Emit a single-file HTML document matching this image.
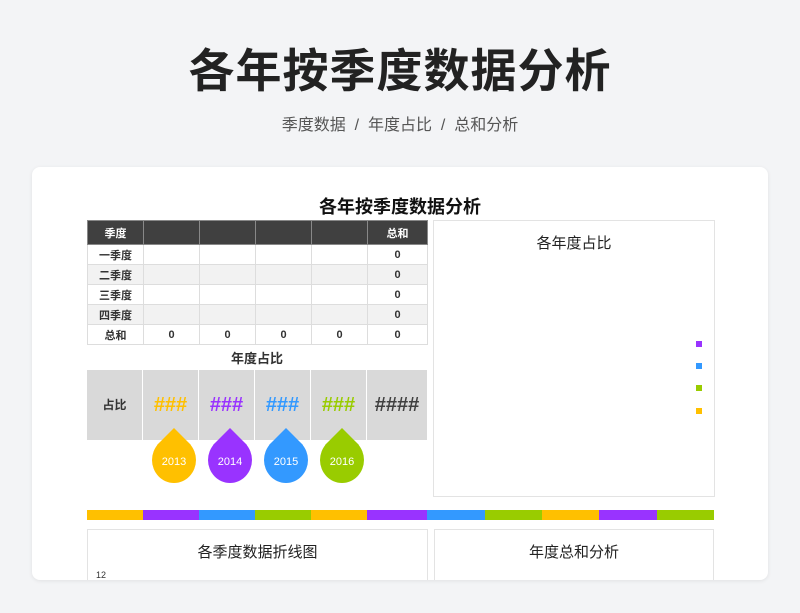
<!DOCTYPE html>
<html><head><meta charset="utf-8"><style>
*{margin:0;padding:0;box-sizing:border-box}
body{width:800px;height:613px;background:#f3f4f6;font-family:"Liberation Sans","Noto Sans CJK SC",sans-serif;position:relative;overflow:hidden;color:#333}
.abs{position:absolute}
h1{position:absolute;left:0;width:800px;top:35px;text-align:center;font-size:46px;font-weight:bold;color:#222;letter-spacing:1px}
.sub{top:111px;left:0;width:800px;text-align:center;font-size:16px;color:#555}
.card{left:32px;top:167px;width:736px;height:413px;background:#fff;border-radius:8px;box-shadow:0 1px 4px rgba(0,0,0,.08);overflow:hidden}
table{border-collapse:collapse;position:absolute;left:55px;top:53px}
td{border:1px solid #ddd;font-size:11px;font-weight:bold;text-align:center;height:20px;padding:0}
.hd td{background:#404040;color:#fff;height:24px;border-color:#888}
.g td{background:#f2f2f2}
.drop{position:absolute;width:44px;height:46px;border-radius:50%;color:#fff;font-size:11px;text-align:center;line-height:50px}
.drop:before{content:"";position:absolute;left:10px;top:-4px;width:24px;height:24px;background:inherit;transform:rotate(45deg);z-index:-1}
.sq{position:absolute;left:664px;width:6px;height:6px}
.hc{line-height:70px;text-align:center;font-size:20px;font-weight:bold;border-right:1px solid #fff}
</style></head><body>
<h1>各年按季度数据分析</h1>
<div class="abs sub">季度数据 &nbsp;/&nbsp; 年度占比 &nbsp;/&nbsp; 总和分析</div>
<div class="abs card">
<div class="abs" style="left:0;width:736px;top:26px;text-align:center;font-size:18px;font-weight:bold;color:#111">各年按季度数据分析</div>
<table>
<colgroup><col style="width:56px"><col style="width:56px"><col style="width:56px"><col style="width:56px"><col style="width:56px"><col style="width:60px"></colgroup>
<tr class="hd"><td>季度</td><td></td><td></td><td></td><td></td><td>总和</td></tr>
<tr><td>一季度</td><td></td><td></td><td></td><td></td><td>0</td></tr>
<tr class="g"><td>二季度</td><td></td><td></td><td></td><td></td><td>0</td></tr>
<tr><td>三季度</td><td></td><td></td><td></td><td></td><td>0</td></tr>
<tr class="g"><td>四季度</td><td></td><td></td><td></td><td></td><td>0</td></tr>
<tr><td>总和</td><td>0</td><td>0</td><td>0</td><td>0</td><td>0</td></tr>
</table>
<div class="abs" style="left:55px;width:340px;top:181px;text-align:center;font-size:13px;font-weight:bold">年度占比</div>
<div class="abs" style="left:55px;top:203px;width:340px;height:70px;background:#d9d9d9;display:flex">
<div class="hc" style="width:56px;font-size:12px">占比</div>
<div class="hc" style="width:56px;color:#ffc000">###</div>
<div class="hc" style="width:56px;color:#9933ff">###</div>
<div class="hc" style="width:56px;color:#3399ff">###</div>
<div class="hc" style="width:56px;color:#99cc00">###</div>
<div class="hc" style="flex:1;color:#404040;border:0">####</div>
</div>
<div style="position:absolute;left:0;top:0;z-index:0">
<div class="drop" style="left:120px;top:270px;background:#ffc000">2013</div>
<div class="drop" style="left:176px;top:270px;background:#9933ff">2014</div>
<div class="drop" style="left:232px;top:270px;background:#3399ff">2015</div>
<div class="drop" style="left:288px;top:270px;background:#99cc00">2016</div>
</div>
<div class="abs" style="left:401px;top:53px;width:282px;height:277px;border:1px solid #e3e3e3"></div>
<div class="abs" style="left:401px;top:65px;width:282px;text-align:center;font-size:15px;color:#222">各年度占比</div>
<div class="sq" style="top:174px;background:#9933ff"></div>
<div class="sq" style="top:196px;background:#3399ff"></div>
<div class="sq" style="top:218px;background:#99cc00"></div>
<div class="sq" style="top:241px;background:#ffc000"></div>
<div class="abs" style="left:55px;top:343px;height:10px;width:627px;display:flex">
<div style="width:56px;background:#ffc000"></div><div style="width:56px;background:#9933ff"></div><div style="width:56px;background:#3399ff"></div><div style="width:56px;background:#99cc00"></div><div style="width:56px;background:#ffc000"></div><div style="width:60px;background:#9933ff"></div><div style="width:58px;background:#3399ff"></div><div style="width:57px;background:#99cc00"></div><div style="width:57px;background:#ffc000"></div><div style="width:58px;background:#9933ff"></div><div style="flex:1;background:#99cc00"></div>
</div>
<div class="abs" style="left:55px;top:362px;width:341px;height:70px;border:1px solid #e3e3e3"></div>
<div class="abs" style="left:55px;top:374px;width:341px;text-align:center;font-size:15px;color:#222">各季度数据折线图</div>
<div class="abs" style="left:64px;top:403px;font-size:9px">12</div>
<div class="abs" style="left:402px;top:362px;width:280px;height:70px;border:1px solid #e3e3e3"></div>
<div class="abs" style="left:402px;top:374px;width:280px;text-align:center;font-size:15px;color:#222">年度总和分析</div>
</div>
</body></html>
